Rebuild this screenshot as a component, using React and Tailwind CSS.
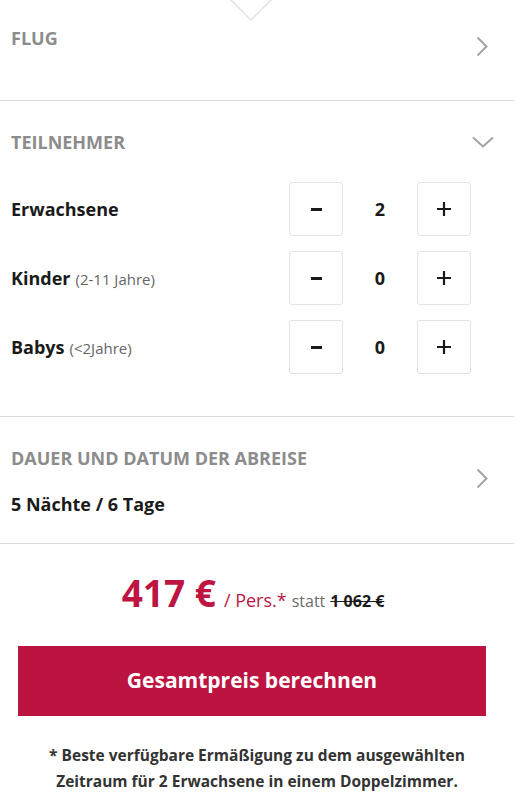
import React from 'react';

const font = { fontFamily: '"Open Sans", "Noto Sans", sans-serif' };

const ChevronRight = () => (
  <svg width="12" height="21" viewBox="0 0 12 21" fill="none" className="shrink-0">
    <path d="M1.5 1.5l9 9-9 9" stroke="#a3a3a3" strokeWidth="2" />
  </svg>
);

const ChevronDown = () => (
  <svg width="22" height="12" viewBox="0 0 22 12" fill="none" className="shrink-0">
    <path d="M1 1.5l10 9 10-9" stroke="#a3a3a3" strokeWidth="2" />
  </svg>
);

const Counter = ({ label, hint, value }) => (
  <div className="flex items-center justify-between">
    <div className="text-[18px] leading-[18px] font-bold text-[#1a1a1a]">
      {label}
      {hint && <span className="ml-[5px] text-[15px] font-normal text-[#666]">{hint}</span>}
    </div>
    <div className="flex items-center mr-[32px]">
      <button className="w-[54px] h-[54px] rounded-[3px] border border-[#e3e3e3] flex items-center justify-center">
        <span className="block w-[11px] h-[3px] bg-[#1a1a1a]" />
      </button>
      <span className="w-[74px] text-center text-[18px] leading-[18px] font-bold text-[#1a1a1a]">{value}</span>
      <button className="w-[54px] h-[54px] rounded-[3px] border border-[#e3e3e3] flex items-center justify-center">
        <svg width="14" height="14" viewBox="0 0 14 14">
          <path d="M7 0v14M0 7h14" stroke="#1a1a1a" strokeWidth="2.2" />
        </svg>
      </button>
    </div>
  </div>
);

export default function App() {
  return (
    <div className="w-[514px] h-[793px] overflow-hidden bg-white" style={font}>
      {/* Flug */}
      <div className="relative h-[101px] border-b border-[#d9d9d9] pl-[11px] pr-[26px] flex justify-between items-start">
        <svg className="absolute left-[229px] top-0" width="44" height="22" viewBox="0 0 44 22" fill="none">
          <path d="M1 -1l21 21 21-21" stroke="#e3e3e3" strokeWidth="1.5" />
        </svg>
        <h2 className="pt-[29px] text-[18px] leading-[18px] font-bold text-[#8c8c8c] uppercase">Flug</h2>
        <div className="pt-[36px]"><ChevronRight /></div>
      </div>

      {/* Teilnehmer */}
      <div className="border-b border-[#d9d9d9] px-[11px] pt-[32px] pb-[42px]">
        <div className="flex justify-between items-center pr-[9px]">
          <h2 className="text-[18px] leading-[18px] font-bold text-[#8c8c8c] uppercase">Teilnehmer</h2>
          <ChevronDown />
        </div>
        <div className="mt-[31px] flex flex-col gap-[15px]">
          <Counter label="Erwachsene" value="2" />
          <Counter label="Kinder" hint="(2-11 Jahre)" value="0" />
          <Counter label="Babys" hint="(<2Jahre)" value="0" />
        </div>
      </div>

      {/* Dauer */}
      <div className="h-[127px] border-b border-[#d9d9d9] pl-[11px] pr-[26px] flex justify-between items-start">
        <div className="pt-[32px]">
          <h2 className="text-[18px] leading-[18px] font-bold text-[#8c8c8c] uppercase">Dauer und Datum der Abreise</h2>
          <p className="mt-[28px] text-[18px] leading-[18px] font-bold text-[#1a1a1a]">5 Nächte / 6 Tage</p>
        </div>
        <div className="pt-[51px]"><ChevronRight /></div>
      </div>

      {/* Preis */}
      <div className="pt-[30px] flex justify-center items-baseline text-[#bd1442] pr-[8px]">
        <span className="text-[37px] leading-[37px] font-bold">417 €</span>
        <span className="ml-[8px] text-[18px]">/ Pers.*</span>
        <span className="ml-[5px] text-[16px] text-[#6b6b6b]">statt</span>
        <span className="ml-[5px] text-[16px] font-bold text-[#1a1a1a] line-through">1 062 €</span>
      </div>

      <div className="pl-[18px] pr-[28px] mt-[32px]">
        <button className="w-full h-[70px] bg-[#bc1341] text-white text-[21px] font-bold">
          Gesamtpreis berechnen
        </button>
      </div>

      <p className="mt-[26px] px-[10px] text-center text-[15.5px] leading-[26px] font-bold text-[#333]">
        * Beste verfügbare Ermäßigung zu dem ausgewählten
        <br />
        Zeitraum für 2 Erwachsene in einem Doppelzimmer.
      </p>
    </div>
  );
}
